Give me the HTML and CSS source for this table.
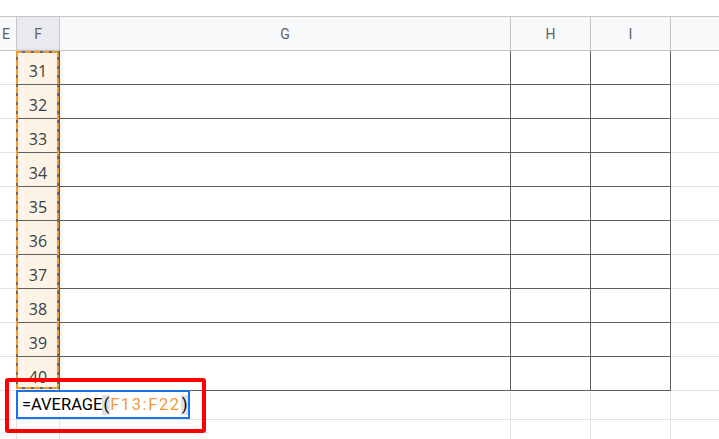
FILE: index.html
```html
<!DOCTYPE html>
<html>
<head>
<meta charset="utf-8">
<link rel="stylesheet" href="styles.css">
</head>
<body>
<div class="page">
  <div class="grid">
    <div class="hd hd-e">E</div>
    <div class="hd hd-sel">F</div>
    <div class="hd">G</div>
    <div class="hd">H</div>
    <div class="hd">I</div>
    <div class="hd hd-j"></div>

    <div class="c e"></div><div class="c f"><span>31</span></div><div class="c d"></div><div class="c d"></div><div class="c d"></div><div class="c j"></div>
    <div class="c e"></div><div class="c f"><span>32</span></div><div class="c d"></div><div class="c d"></div><div class="c d"></div><div class="c j"></div>
    <div class="c e"></div><div class="c f"><span>33</span></div><div class="c d"></div><div class="c d"></div><div class="c d"></div><div class="c j"></div>
    <div class="c e"></div><div class="c f"><span>34</span></div><div class="c d"></div><div class="c d"></div><div class="c d"></div><div class="c j"></div>
    <div class="c e"></div><div class="c f"><span>35</span></div><div class="c d"></div><div class="c d"></div><div class="c d"></div><div class="c j"></div>
    <div class="c e"></div><div class="c f"><span>36</span></div><div class="c d"></div><div class="c d"></div><div class="c d"></div><div class="c j"></div>
    <div class="c e"></div><div class="c f"><span>37</span></div><div class="c d"></div><div class="c d"></div><div class="c d"></div><div class="c j"></div>
    <div class="c e"></div><div class="c f"><span>38</span></div><div class="c d"></div><div class="c d"></div><div class="c d"></div><div class="c j"></div>
    <div class="c e"></div><div class="c f"><span>39</span></div><div class="c d"></div><div class="c d"></div><div class="c d"></div><div class="c j"></div>
    <div class="c e"></div><div class="c f"><span>40</span></div><div class="c d"></div><div class="c d"></div><div class="c d"></div><div class="c j"></div>

    <div class="c l r41"></div><div class="c l r41"></div><div class="c l r41"></div><div class="c l r41"></div><div class="c l r41"></div><div class="c l r41 nb"></div>
    <div class="c l r42"></div><div class="c l r42"></div><div class="c l r42"></div><div class="c l r42"></div><div class="c l r42"></div><div class="c l r42 nb"></div>
  </div>

  <div class="marquee"></div>

  <div class="editor">=AVERAGE<span class="paren">(</span><span class="ref">F13:F22</span><span class="paren">)</span></div>

  <div class="highlight"></div>
</div>
</body>
</html>
```

FILE: styles.css
```css
* { box-sizing: border-box; }

html, body {
  margin: 0;
  padding: 0;
  background: #ffffff;
}

body {
  width: 719px;
  height: 439px;
  overflow: hidden;
  font-family: Roboto, "Liberation Sans", sans-serif;
}

.page {
  position: relative;
  width: 719px;
  height: 439px;
  padding-top: 16px;
}

.grid {
  display: grid;
  grid-template-columns: 17px 43px 451px 80px 80px 1fr;
  grid-template-rows: 34px repeat(10, 34px) 29px 30px;
  border-top: 1px solid #c4c7c5;
}

.hd {
  background: #f8f9fa;
  border-right: 1px solid #c4c7c5;
  border-bottom: 1px solid #c4c7c5;
  color: #5f6368;
  font-size: 14px;
  display: flex;
  align-items: center;
  justify-content: center;
}

.hd-e {
  justify-content: flex-end;
  padding-right: 6px;
}

.hd-sel {
  background: #e8eaed;
}

.hd-j {
  border-right: none;
}

.c {
  border-right: 1px solid #5f5f5f;
  border-bottom: 1px solid #5f5f5f;
}

.c.e {
  border-right: 1px solid #e1e1e1;
  border-bottom: 1px solid #e1e1e1;
}

.c.j {
  border-right: none;
  border-bottom: 1px solid #e1e1e1;
}

.c.f {
  background: #fdf4e7;
  display: flex;
  align-items: center;
  justify-content: center;
  padding-top: 7px;
  font-family: "Open Sans", sans-serif;
  font-size: 16px;
  color: #3c4043;
}

.c.l {
  border-right: 1px solid #e1e1e1;
  border-bottom: 1px solid #e1e1e1;
}

.c.nb {
  border-right: none;
}

.marquee {
  position: absolute;
  left: 16px;
  top: 51px;
  width: 43px;
  height: 338px;
  box-shadow: 2px 0 4px rgba(0, 0, 0, 0.08);
  background:
    repeating-linear-gradient(90deg, #f39a2d 0 6px, #6a6a6a 6px 9px) left top / 100% 2px no-repeat,
    repeating-linear-gradient(90deg, #f39a2d 0 6px, #6a6a6a 6px 9px) left bottom / 100% 2px no-repeat,
    repeating-linear-gradient(180deg, #f39a2d 0 6px, #6a6a6a 6px 9px) left top / 2px 100% no-repeat,
    repeating-linear-gradient(180deg, #f39a2d 0 6px, #6a6a6a 6px 9px) right top / 2px 100% no-repeat;
}

.editor {
  position: absolute;
  left: 16px;
  top: 390px;
  width: 174px;
  height: 29px;
  border: 2px solid #1a73e8;
  background: #ffffff;
  padding-left: 4px;
  display: flex;
  align-items: center;
  font-size: 16.5px;
  color: #000000;
  white-space: nowrap;
}

.paren {
  background: #e0e0e0;
  padding: 0 1px;
  line-height: 20px;
}

.ref {
  color: #f29a3a;
  letter-spacing: 1.6px;
}

.highlight {
  position: absolute;
  left: 5px;
  top: 378px;
  width: 201px;
  height: 55px;
  border: 4px solid #ff0000;
  border-radius: 3px;
}
```
